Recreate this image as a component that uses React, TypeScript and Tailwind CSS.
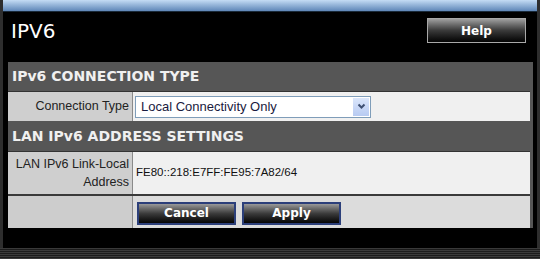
const sans = { fontFamily: '"DejaVu Sans", Verdana, sans-serif' };
const arial = { fontFamily: '"Liberation Sans", Arial, sans-serif' };

function DarkButton({ label, help }: { label: string; help?: boolean }) {
  return (
    <button
      className={
        help
          ? "flex h-[25px] w-[99px] items-center justify-center border border-[#a9a9a9] bg-gradient-to-b from-[#a0a0a0] via-[#3a3a3a] to-[#050505] text-[12px] font-bold text-white"
          : "flex h-[23px] w-[99px] items-center justify-center border-2 border-[#2c3f7a] bg-gradient-to-b from-[#9a9a9a] via-[#3c3c3c] to-[#060606] text-[12px] font-bold text-white"
      }
      style={sans}
    >
      {label}
    </button>
  );
}

export default function App() {
  return (
    <div className="flex h-[259px] w-[540px] flex-col bg-black">
      <div className="flex flex-1 border-x-[3px] border-[#2e2e2e]">
        <div className="flex flex-1 flex-col bg-black">
          {/* top bar */}
          <div className="h-[12px] border-b border-[#1a2a3a] bg-gradient-to-b from-[#c4dcf4] to-[#5f87b8]" />

          {/* title row */}
          <div className="flex h-[50px] items-start justify-between pl-[8px] pr-[11px]">
            <h1 className="pt-[7px] text-[20px] leading-[24px] text-white" style={sans}>
              IPV6
            </h1>
            <div className="pt-[6px]">
              <DarkButton label="Help" help />
            </div>
          </div>

          {/* panel */}
          <div className="mx-[5px] mr-[4px] flex flex-col bg-[#565656] pr-[3px]">
            <div
              className="flex h-[30px] items-center border-b border-[#333] pl-[4px] text-[14px] font-bold text-[#f0f0f0]"
              style={sans}
            >
              IPv6 CONNECTION TYPE
            </div>
            <div className="grid h-[29px] grid-cols-[125px_1fr]">
              <div
                className="flex items-center justify-end border-r border-[#8a8a8a] bg-[#cfcfcf] pr-[3px] text-[12.5px] text-[#222]"
                style={arial}
              >
                Connection Type
              </div>
              <div className="flex items-center bg-[#f0f0f0] pl-[2px]">
                <div className="flex h-[22px] w-[236px] items-center justify-between border border-[#7f9db9] bg-white pl-[5px] pr-[1px]">
                  <span className="text-[13px] text-[#1a1a40]" style={arial}>
                    Local Connectivity Only
                  </span>
                  <span className="flex h-[18px] w-[16px] items-center justify-center bg-gradient-to-b from-[#dbe6fb] to-[#b7caf2]">
                    <svg width="9" height="7" viewBox="0 0 9 7">
                      <path d="M1.5 1.5 L4.5 4.5 L7.5 1.5" stroke="#3f5073" strokeWidth="2" fill="none" />
                    </svg>
                  </span>
                </div>
              </div>
            </div>

            <div
              className="flex h-[31px] items-center border-b border-[#333] pl-[4px] text-[14px] font-bold text-[#f0f0f0]"
              style={sans}
            >
              LAN IPv6 ADDRESS SETTINGS
            </div>
            <div className="grid h-[44px] grid-cols-[125px_1fr] border-b-2 border-[#3a3a3a]">
              <div
                className="flex flex-col items-end justify-center border-r border-[#8a8a8a] bg-[#cfcfcf] pr-[3px] text-[12.5px] leading-[18px] text-[#222]"
                style={arial}
              >
                <span>LAN IPv6 Link-Local</span>
                <span>Address</span>
              </div>
              <div className="flex items-center bg-[#f0f0f0] pl-[3px] text-[11.5px] text-[#111]" style={arial}>
                FE80::218:E7FF:FE95:7A82/64
              </div>
            </div>
            <div className="grid h-[32px] grid-cols-[125px_1fr]">
              <div className="border-r border-[#8a8a8a] bg-[#cdcdcd]" />
              <div className="flex items-center gap-[6px] bg-[#dcdcdc] pl-[4px] pt-[2px]">
                <DarkButton label="Cancel" />
                <DarkButton label="Apply" />
              </div>
            </div>
          </div>
          <div className="flex-1" />
        </div>
      </div>
      {/* bottom strip */}
      <div className="h-[11px] bg-[repeating-linear-gradient(to_bottom,#3a3a3a_0px,#3a3a3a_1px,#1c1c1c_1px,#1c1c1c_2px)]" />
    </div>
  );
}
